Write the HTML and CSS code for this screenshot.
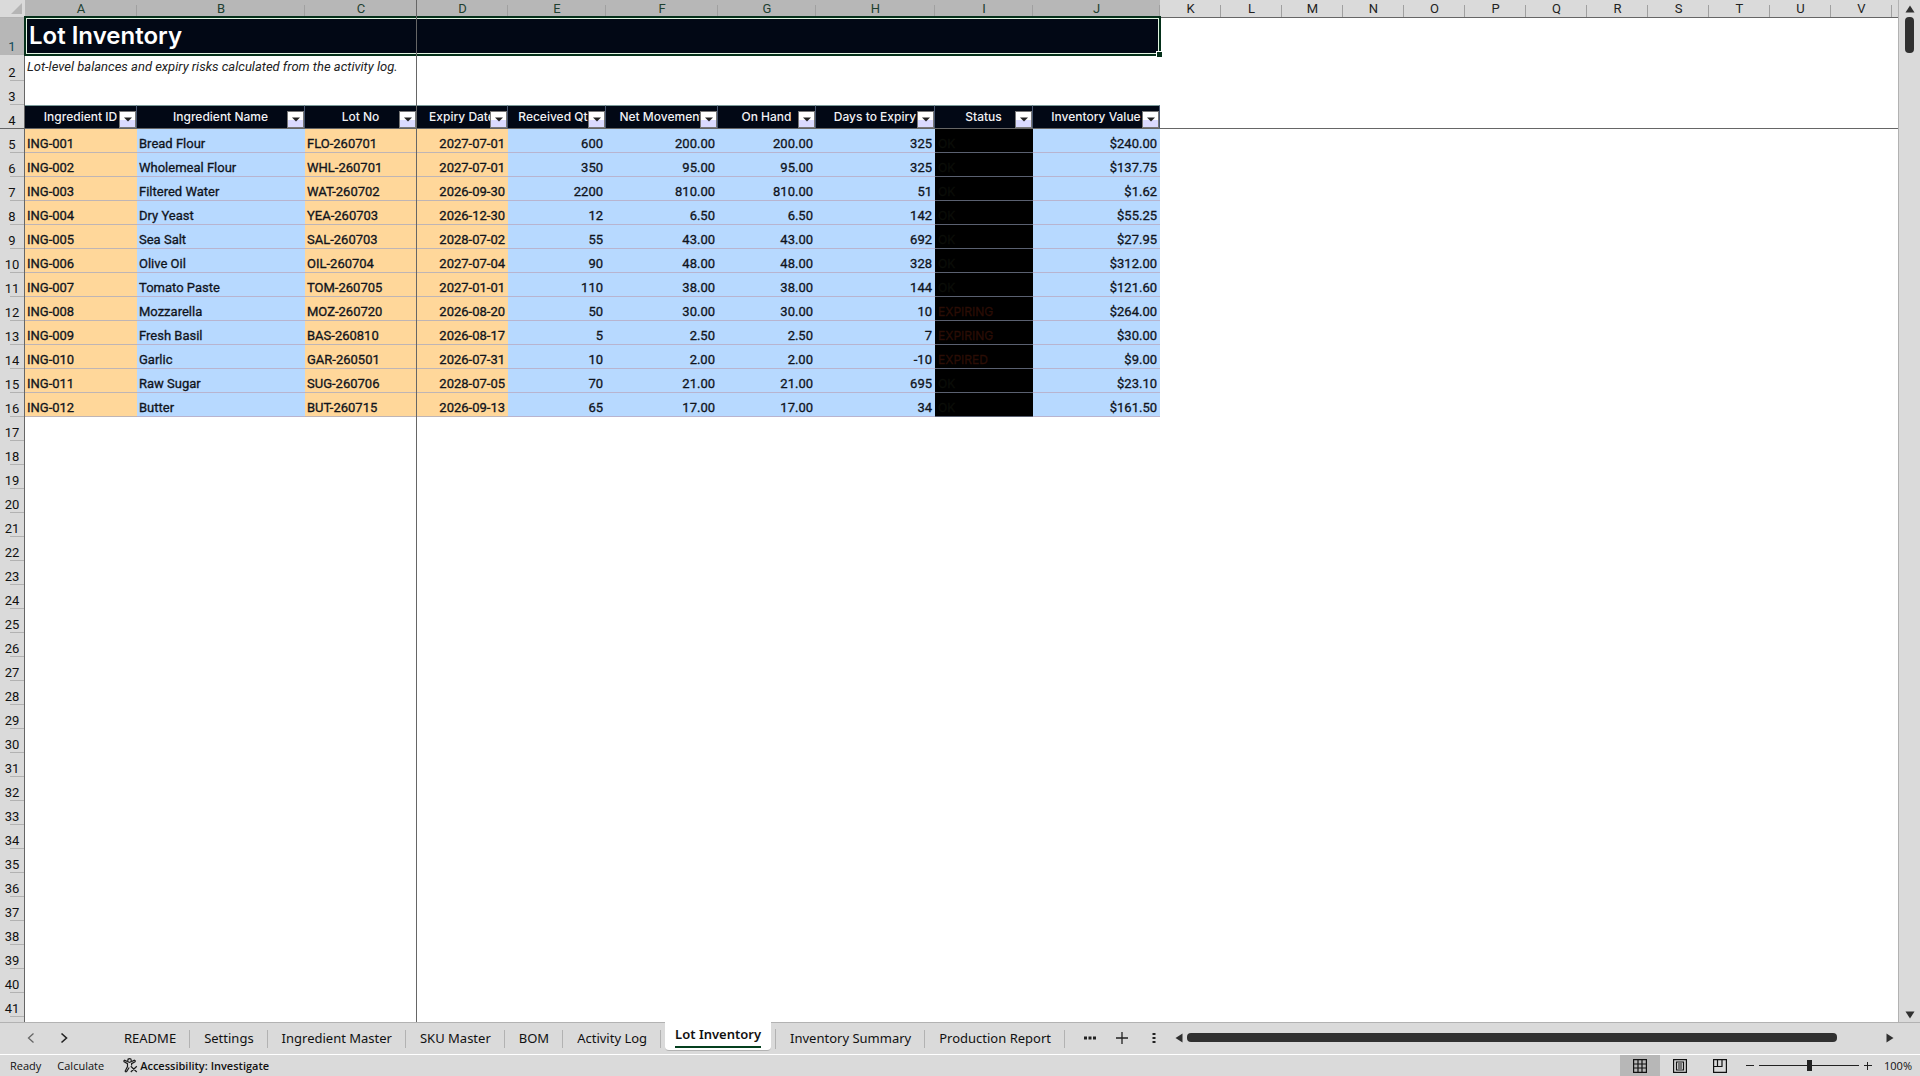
FILE: index.html
```
<!DOCTYPE html>
<html lang="en">
<head>
<meta charset="utf-8">
<title>Lot Inventory</title>
<link rel="stylesheet" href="styles.css">
</head>
<body>
<main class="workspace">
  <div class="sheet">
    <table class="grid">
      <colgroup>
        <col class="w-gutter"><col class="w-a"><col class="w-b"><col class="w-a"><col class="w-d"><col class="w-e"><col class="w-a"><col class="w-e"><col class="w-h"><col class="w-e"><col class="w-j">
        <col class="w-std"><col class="w-std"><col class="w-std"><col class="w-std"><col class="w-std"><col class="w-std"><col class="w-std"><col class="w-std"><col class="w-std"><col class="w-std"><col class="w-std"><col class="w-std"><col>
      </colgroup>
      <thead><tr id="letters"><th class="corner"><svg width="11" height="11" viewBox="0 0 11 11"><path d="M11 0V11H0Z" fill="#b5b5b5"/></svg></th></tr></thead>
      <tbody id="rows">
        <tr class="title-row">
          <th class="num selected">1</th>
          <td class="title" colspan="10">Lot Inventory<span class="selection"></span><span class="handle"></span></td>
          <td colspan="13"></td>
        </tr>
        <tr class="note-row"><th class="num">2</th><td class="note" colspan="10">Lot-level balances and expiry risks calculated from the activity log.</td><td colspan="13"></td></tr>
        <tr><th class="num">3</th><td colspan="23"></td></tr>
      </tbody>
    </table>
    <div class="freeze-v"></div>
    <div class="freeze-h"></div>
  </div>
  <div class="vscroll">
    <button class="arrow" aria-label="Scroll up"><svg width="10" height="8" viewBox="0 0 10 8"><path d="M5 0.500L9.500 7.500H0.500Z" fill="#303030"/></svg></button>
    <div class="vthumb"></div>
    <button class="arrow arrow-down" aria-label="Scroll down"><svg width="10" height="8" viewBox="0 0 10 8"><path d="M5 7.500L9.500 0.500H0.500Z" fill="#303030"/></svg></button>
  </div>
</main>
<nav class="tabbar" aria-label="Sheets">
  <div class="tabnav">
    <button aria-label="Previous sheet"><svg width="8" height="12" viewBox="0 0 8 12"><path d="M6.500 1.500L1.500 6L6.500 10.500" fill="none" stroke="#666" stroke-width="1.300"/></svg></button>
    <button aria-label="Next sheet"><svg width="8" height="12" viewBox="0 0 8 12"><path d="M1.500 1.500L6.500 6L1.500 10.500" fill="none" stroke="#222" stroke-width="1.600"/></svg></button>
  </div>
  <div class="tabs">
    <button class="tab">README</button>
    <button class="tab">Settings</button>
    <button class="tab">Ingredient Master</button>
    <button class="tab">SKU Master</button>
    <button class="tab">BOM</button>
    <button class="tab">Activity Log</button>
    <button class="tab active"><span>Lot Inventory</span></button>
    <button class="tab">Inventory Summary</button>
    <button class="tab">Production Report</button>
  </div>
  <div class="tabtools">
    <button aria-label="More sheets"><svg width="12" height="4" viewBox="0 0 12 4"><path d="M0 .5h3v3h-3zM4.500 .5h3v3h-3zM9 .5h3v3h-3z" fill="#222"/></svg></button>
    <button aria-label="New sheet"><svg width="12" height="12" viewBox="0 0 12 12"><path d="M6 0V12M0 6H12" stroke="#222" stroke-width="1.300"/></svg></button>
    <button aria-label="Resize tabs"><svg width="4" height="12" viewBox="0 0 4 12"><path d="M.5 1h3v2h-3zM.5 5h3v2h-3zM.5 9h3v2h-3z" fill="#222"/></svg></button>
  </div>
  <div class="hscroll">
    <button aria-label="Scroll left"><svg width="8" height="10" viewBox="0 0 8 10"><path d="M0.500 5L7.500 0.500V9.500Z" fill="#303030"/></svg></button>
    <div class="htrack"><div class="hthumb"></div></div>
    <button aria-label="Scroll right"><svg width="8" height="10" viewBox="0 0 8 10"><path d="M7.500 5L0.500 0.500V9.500Z" fill="#303030"/></svg></button>
  </div>
</nav>
<footer class="status">
  <span class="ready">Ready</span>
  <span class="calc">Calculate</span>
  <button class="access"><svg width="15" height="15" viewBox="0 0 15 15" fill="none" stroke="#1c1c1c" stroke-width="1.200"><circle cx="6.500" cy="2.500" r="1.800"/><path d="M4.800 3.800L1.500 2.200Q.4 2.600 1.200 3.800L4.500 5.600V8.500L2.200 13Q2.500 14.300 3.600 13.600L6.200 9.500M8.200 3.800L11.500 2.200Q12.800 2.600 12 3.800L8.600 5.600V7.600M7.800 8.200L13.800 14M13.800 8.200L7.800 14"/></svg><span>Accessibility: Investigate</span></button>
  <div class="views">
    <button class="on" aria-label="Normal view"><svg width="14" height="14" viewBox="0 0 14 14" fill="none" stroke="#111" stroke-width="1.200"><path d="M.6 .6H13.400V13.400H.6ZM5 .6V13.400M9 .6V13.400M.6 5H13.400M.6 9H13.400"/></svg></button>
    <button aria-label="Page layout"><svg width="14" height="14" viewBox="0 0 14 14" fill="none" stroke="#111" stroke-width="1.200"><path d="M.6 .6H13.400V13.400H.6ZM3.500 3H10.500V11H3.500ZM5 5H9M5 7H9M5 9H9"/></svg></button>
    <button aria-label="Page break preview"><svg width="14" height="14" viewBox="0 0 14 14" fill="none" stroke="#111" stroke-width="1.200"><path d="M.6 .6H13.400V13.400H.6ZM4.500 .6V7.500H9V.6M.6 7.500H4.500"/></svg></button>
  </div>
  <div class="zoom">
    <button aria-label="Zoom out"><svg width="8" height="8" viewBox="0 0 8 8"><path d="M0 3.500H8" stroke="#222" stroke-width="1"/></svg></button>
    <input class="slider" type="range" min="0" max="100" value="50" aria-label="Zoom">
    <button aria-label="Zoom in"><svg width="8" height="8" viewBox="0 0 8 8"><path d="M0 3.500H8M3.500 0V8" stroke="#222" stroke-width="1"/></svg></button>
    <button class="percent">100%</button>
  </div>
</footer>
<script src="sheet.js"></script>
</body>
</html>
```
FILE: styles.css
```
* { box-sizing: border-box; }

body {
  margin: 0;
  height: 100vh;
  display: flex;
  flex-direction: column;
  overflow: hidden;
  background: #dadada;
  color: #111;
  font-family: Roboto, "Liberation Sans", sans-serif;
  font-size: 13px;
}

button {
  margin: 0;
  padding: 0;
  border: 0;
  background: none;
  color: inherit;
  font: inherit;
  display: flex;
  align-items: center;
  justify-content: center;
}

/* Sheet */
.workspace { flex: 1; min-height: 0; display: flex; border-bottom: 1px solid #b2b2b2; }
.sheet {
  position: relative;
  flex: 1;
  min-width: 0;
  overflow: hidden;
  background: #fff;
  border-right: 1px solid #b2b2b2;
}
.grid { width: 100%; table-layout: fixed; border-collapse: separate; border-spacing: 0; }
.w-gutter { width: 25px; }
.w-a { width: 112px; }
.w-b { width: 168px; }
.w-d { width: 91px; }
.w-e { width: 98px; }
.w-h { width: 119px; }
.w-j { width: 127px; }
.w-std { width: 61px; }

.grid th, .grid td { padding: 0; line-height: 16px; white-space: nowrap; }
.grid tr { height: 24px; }
.grid td { vertical-align: bottom; }

.grid thead tr { height: 18px; }
.grid thead th {
  height: 18px;
  background: linear-gradient(#a0a0a0, #a0a0a0) right bottom / 1px 12px no-repeat #dadada;
  border-bottom: 1px solid #666;
  font-weight: 400;
  color: #222;
}
.grid thead th.selected { background-color: #b7b7b7; color: #1d4030; }
.grid thead th:last-child { background-image: none; }
.grid thead th.corner { text-align: right; vertical-align: bottom; background-image: none; border-bottom-color: #b2b2b2; }
.corner svg { display: block; margin: 0 3px 3px auto; }

.grid .num {
  vertical-align: bottom;
  border-right: 1px solid #666;
  background: linear-gradient(#b2b2b2, #b2b2b2) right bottom / 14px 1px no-repeat #dadada;
  font-weight: 400;
  text-align: center;
}
.grid .num.selected { background-color: #b7b7b7; color: #0f4a5a; }

.grid .title-row { height: 37px; }
.grid .title {
  position: relative;
  padding: 0 0 2px 4px;
  vertical-align: middle;
  background: #020815;
  color: #fff;
  font-family: Inter, Roboto, sans-serif;
  font-size: 24px;
  line-height: 32px;
  font-weight: 600;
}
.selection { position: absolute; inset: -2px -1px -1px -1px; border: 2px solid #05301a; outline: 1px solid #e2f5e2; outline-offset: -3px; }
.handle { position: absolute; right: -2px; bottom: -2px; width: 6px; height: 6px; background: #05301a; border: solid #fff; border-width: 1px 0 0 1px; }

.grid .note-row { height: 26px; }
.grid .note { padding-left: 2px; vertical-align: top; font-style: italic; line-height: 24px; color: #222; }

.grid .heading {
  position: relative;
  padding-bottom: 2px;
  background: #020815;
  color: #f1f1f4;
  border-top: 1px solid #7a9a9a;
  border-right: 1px solid #4a5870;
  font-family: Inter, Roboto, sans-serif;
  font-size: 12px;
  font-weight: 500;
  text-align: center;
  vertical-align: middle;
}
.heading span { display: flex; justify-content: center; }
.filter {
  position: absolute;
  right: 0;
  bottom: 1px;
  width: 17px;
  height: 17px;
  border: 1px solid #777;
  background: linear-gradient(#fff 55%, #dadaff 55%);
}

.grid .cell { border-bottom: 1px solid #b8b4cf; background: #b7d9ff; font-weight: 400; -webkit-text-stroke: 0.3px; color: #10141c; }
.grid .key { background: #ffd79a; border-bottom-color: #bfb5b5; }
.grid .left { padding-left: 2px; }
.grid .right { text-align: right; padding-right: 3px; }
.grid .flag { background: #000; border-bottom-color: #5a6070; padding-left: 3px; font-family: Inter, Roboto, sans-serif; font-size: 12px; color: #0b0d08; }
.grid .flag.warn { color: #2a0d05; }

.freeze-v { position: absolute; left: 416px; top: 0; bottom: 0; width: 1px; background: #666; }
.freeze-h { position: absolute; left: 0; right: 0; top: 128px; height: 1px; background: #666; }

.vscroll { width: 21px; display: flex; flex-direction: column; align-items: center; padding: 4px 0 3px; }
.arrow { width: 20px; height: 9px; }
.arrow-down { margin-top: auto; }
.vthumb { width: 9px; height: 36px; margin-top: 4px; border-radius: 4px; background: #303030; }

/* Sheet tabs */
.tabbar {
  height: 32px;
  display: flex;
  align-items: stretch;
  border-bottom: 1px solid #fff;
  font-family: "Noto Sans", "Open Sans", sans-serif;
}
.tabbar button { padding-bottom: 2px; }
.tabnav { display: flex; width: 110px; padding-left: 14px; }
.tabnav button { width: 33px; }
.tabs { display: flex; }
.tabs .tab {
  padding: 0 14px 2px;
  background: linear-gradient(#b2b2b2, #b2b2b2) right center / 1px 18px no-repeat;
  white-space: nowrap;
}
.tabs .active {
  height: 29px;
  margin: -1px 4px 0;
  padding: 0 10px;
  align-items: flex-start;
  background: #fff;
  border-bottom: 1px solid #b2b2b2;
  border-radius: 0 0 4px 4px;
  font-weight: 600;
}
.active span { line-height: 24px; border-bottom: 2px solid #05401f; }
.active + .tab { border-left: 1px solid #b2b2b2; border-image: linear-gradient(transparent 7px, #b2b2b2 7px, #b2b2b2 25px, transparent 25px) 1; }
.tabtools { display: flex; padding-left: 9px; }
.tabtools button { width: 32px; }
.hscroll { flex: 1; display: flex; align-items: center; gap: 4px; padding: 0 26px 2px 5px; }
.hscroll button { padding: 0; }
.htrack { flex: 1; padding-right: 45px; }
.hthumb { height: 9px; border-radius: 4px; background: #303030; }

/* Status bar */
.status {
  height: 21px;
  display: flex;
  align-items: center;
  padding-right: 8px;
  font-family: "Open Sans", "Noto Sans", sans-serif;
  font-size: 11px;
}
.ready { padding: 0 8px 0 10px; }
.calc { padding: 0 12px 0 8px; }
.access { gap: 2px; padding-left: 7px; font-weight: 600; }
.views { display: flex; align-self: stretch; margin-left: auto; }
.views button { width: 40px; }
.views .on { background: #b7b7b7; }
.zoom { display: flex; align-items: center; padding-left: 1px; }
.zoom button { width: 18px; }
.zoom .percent { width: 31px; margin-left: 4px; justify-content: flex-end; }
.slider { appearance: none; width: 100px; height: 12px; margin: 0; background: linear-gradient(#222, #222) center / 100% 1px no-repeat; }
.slider::-webkit-slider-thumb { appearance: none; width: 5px; height: 11px; background: #222; }
```
FILE: sheet.js
```
const headings = ["Ingredient ID", "Ingredient Name", "Lot No", "Expiry Date", "Received Qty", "Net Movement", "On Hand", "Days to Expiry", "Status", "Inventory Value"];
const lots = [
  ["ING-001", "Bread Flour", "FLO-260701", "2027-07-01", "600", "200.00", "200.00", "325", "OK", "$240.00"],
  ["ING-002", "Wholemeal Flour", "WHL-260701", "2027-07-01", "350", "95.00", "95.00", "325", "OK", "$137.75"],
  ["ING-003", "Filtered Water", "WAT-260702", "2026-09-30", "2200", "810.00", "810.00", "51", "OK", "$1.62"],
  ["ING-004", "Dry Yeast", "YEA-260703", "2026-12-30", "12", "6.50", "6.50", "142", "OK", "$55.25"],
  ["ING-005", "Sea Salt", "SAL-260703", "2028-07-02", "55", "43.00", "43.00", "692", "OK", "$27.95"],
  ["ING-006", "Olive Oil", "OIL-260704", "2027-07-04", "90", "48.00", "48.00", "328", "OK", "$312.00"],
  ["ING-007", "Tomato Paste", "TOM-260705", "2027-01-01", "110", "38.00", "38.00", "144", "OK", "$121.60"],
  ["ING-008", "Mozzarella", "MOZ-260720", "2026-08-20", "50", "30.00", "30.00", "10", "EXPIRING", "$264.00"],
  ["ING-009", "Fresh Basil", "BAS-260810", "2026-08-17", "5", "2.50", "2.50", "7", "EXPIRING", "$30.00"],
  ["ING-010", "Garlic", "GAR-260501", "2026-07-31", "10", "2.00", "2.00", "-10", "EXPIRED", "$9.00"],
  ["ING-011", "Raw Sugar", "SUG-260706", "2028-07-05", "70", "21.00", "21.00", "695", "OK", "$23.10"],
  ["ING-012", "Butter", "BUT-260715", "2026-09-13", "65", "17.00", "17.00", "34", "OK", "$161.50"]
];

const letters = [..."ABCDEFGHIJKLMNOPQRSTUV"].map((c, i) => `<th class="${i < 10 ? "selected" : ""}">${c}</th>`);
document.getElementById("letters").insertAdjacentHTML("beforeend", letters.join("") + "<th></th>");

const arrow = '<svg width="8" height="5" viewBox="0 0 8 5"><path d="M0 0.500H8L4 4.500Z" fill="#222"/></svg>';
const kind = ["key left", "left", "key left", "key right", "right", "right", "right", "right", "flag", "right"];

let html = '<tr><th class="num">4</th>' + headings.map(h =>
  `<th class="heading"><span>${h}</span><button class="filter" aria-label="Filter ${h}">${arrow}</button></th>`).join("") + '<td colspan="13"></td></tr>';

lots.forEach((lot, r) => {
  html += `<tr><th class="num">${r + 5}</th>` + lot.map((v, i) =>
    `<td class="cell ${kind[i]}${v.startsWith("EXP") ? " warn" : ""}">${v}</td>`).join("") + '<td colspan="13"></td></tr>';
});
for (let n = 17; n <= 41; n++) html += `<tr><th class="num">${n}</th><td colspan="23"></td></tr>`;
html += '<tr><th class="num"></th><td colspan="23"></td></tr>';
document.getElementById("rows").insertAdjacentHTML("beforeend", html);
```
